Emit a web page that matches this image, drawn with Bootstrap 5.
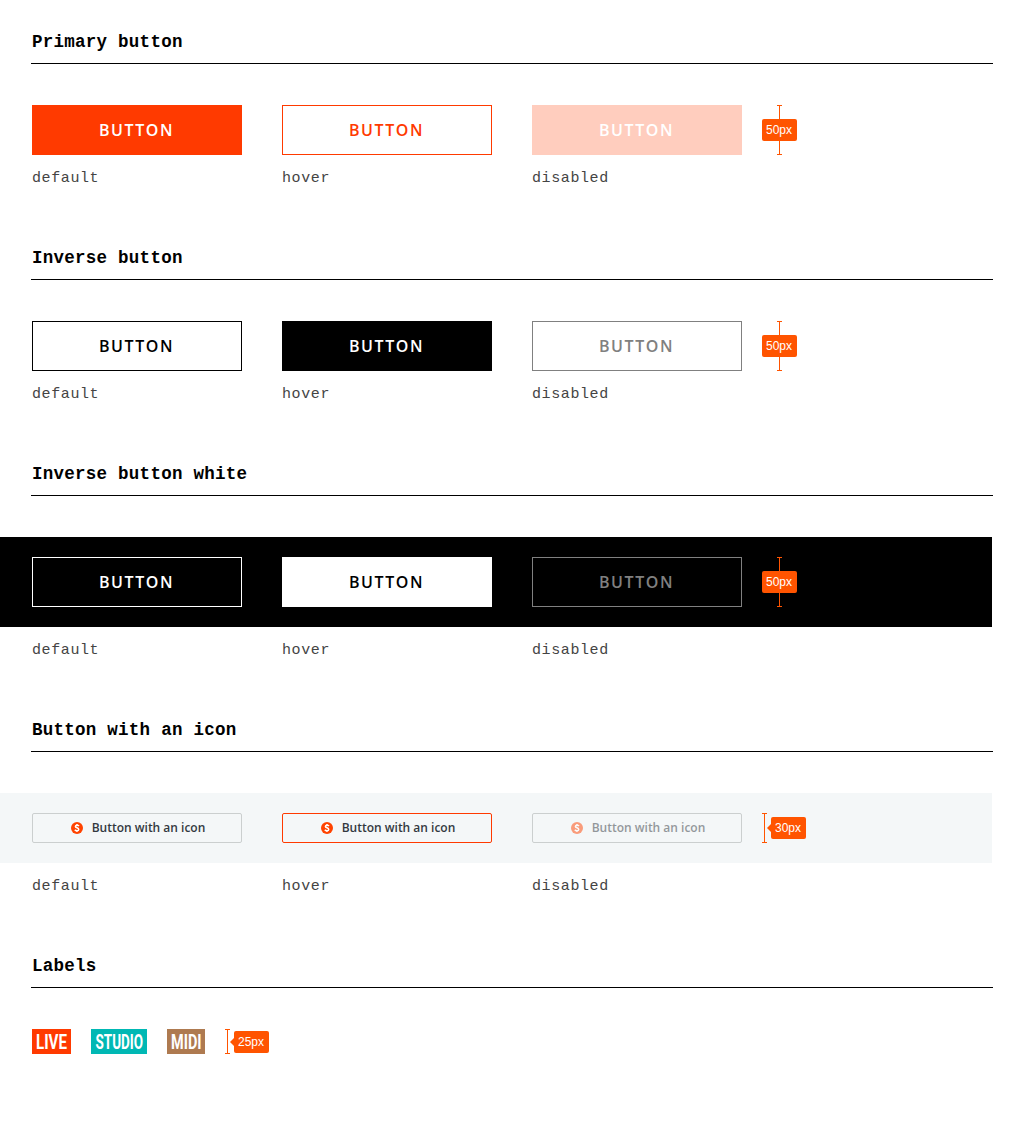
<!DOCTYPE html>
<html lang="en">
<head>
<meta charset="utf-8">
<meta name="viewport" content="width=device-width, initial-scale=1">
<title>Buttons and labels</title>
<link href="https://cdn.jsdelivr.net/npm/bootstrap@5.3.0/dist/css/bootstrap.min.css" rel="stylesheet">
<style>
body{background:#fff;color:#000;min-height:1124px;overflow-x:hidden}
.guide{width:993px}
.guide-title{font:700 17.5px/24px "Liberation Mono",monospace;letter-spacing:.26px;height:64px;margin:0 0 41px 31px;padding:30px 0 0 1px;border-bottom:1px solid #000;width:962px}
.strip{width:992px;padding-left:32px;column-gap:40px}
.strip-dark,.strip-pale{padding-top:20px;padding-bottom:20px}
.strip-dark{background:#000}
.strip-pale{background:#f4f7f8}
.captions{height:61px;padding:12px 0 0 32px;column-gap:40px;font:15px/24px "Liberation Mono",monospace;letter-spacing:.6px;color:#444}
.captions span{width:210px}
.btn.demo{width:210px;height:50px;border-radius:0;padding:0 1px 0 0;font:600 16px/48px "Open Sans",sans-serif;letter-spacing:1.6px;--bs-btn-disabled-opacity:1;opacity:1}
.demo-red{background:#ff3a00!important;border-color:#ff3a00!important;color:#fff!important}
.demo-red-line{background:#fff!important;border-color:#ff3a00!important;color:#ff3a00!important}
.demo-red-off{background:#ffcdbe!important;border-color:#ffcdbe!important;color:#fff!important}
.demo-line{border-color:#000;color:#000}
.demo-black{background:#000;border-color:#000;color:#fff}
.demo-line-off{border-color:#808080!important;color:#808080!important}
.demo-wline{border-color:#fff;color:#fff}
.demo-white{background:#fff;border-color:#fff;color:#000}
.btn.mini{width:210px;height:30px;border-radius:2px;padding:0 0 0 2px;border-color:#cbcfcf;color:#33393f;font:600 12px/28px "Open Sans",sans-serif;gap:9px;opacity:1}
.btn.mini svg{width:12px;height:12px}
.btn.mini.mini-hover{border-color:#ff3a00}
.mini:disabled span,.mini:disabled svg{opacity:.5}
.ruler{width:35px;height:50px;margin-left:-20px;position:relative}
.ruler svg{display:block}
.tag{background:#ff5400;color:#fff;border-radius:2px;width:35px;height:22px;padding-right:1px;font:12px/22px "Liberation Sans",sans-serif;text-align:center}
.ruler .tag{position:absolute;left:0;top:14px}
.side-ruler{margin-left:-20px}
.kinds{padding-left:32px;gap:20px}
.kinds svg{display:block;overflow:visible}
.kinds text{font-family:Roboto,sans-serif;font-weight:700;font-size:20px;fill:#fff}
.kinds .side-ruler{margin-left:0}
</style>
</head>
<body>
<svg class="d-none">
 <symbol id="dollar" viewBox="0 0 12 12"><circle cx="6" cy="6" r="6" fill="#ff4300"/><path d="M8 4.1C7.5 3.5 6.9 3.2 6.1 3.2c-1 0-1.7.4-1.7 1.2 0 1.8 3.3 1.1 3.3 3 0 .8-.7 1.3-1.8 1.3-.8 0-1.6-.3-2.1-.9M6 1.9v1.3M6 8.7v1.4" fill="none" stroke="#fff" stroke-width="1.55"/></symbol>
 <symbol id="span50" viewBox="0 0 35 50"><path d="M15 .5h5M15 49.5h5M17.5 0v50" stroke="#ff5400" fill="none"/></symbol>
</svg>
<main class="guide">
 <section>
  <h2 class="guide-title">Primary button</h2>
  <div class="strip d-flex">
   <button class="btn demo demo-red">BUTTON</button><button class="btn demo demo-red-line">BUTTON</button><button class="btn demo demo-red-off" disabled>BUTTON</button>
   <div class="ruler"><svg width="35" height="50"><use href="#span50"/></svg><div class="tag">50px</div></div>
  </div>
  <div class="captions d-flex"><span>default</span><span>hover</span><span>disabled</span></div>
 </section>
 <section>
  <h2 class="guide-title">Inverse button</h2>
  <div class="strip d-flex">
   <button class="btn demo demo-line">BUTTON</button><button class="btn demo demo-black">BUTTON</button><button class="btn demo demo-line-off" disabled>BUTTON</button>
   <div class="ruler"><svg width="35" height="50"><use href="#span50"/></svg><div class="tag">50px</div></div>
  </div>
  <div class="captions d-flex"><span>default</span><span>hover</span><span>disabled</span></div>
 </section>
 <section>
  <h2 class="guide-title">Inverse button white</h2>
  <div class="strip strip-dark d-flex">
   <button class="btn demo demo-wline">BUTTON</button><button class="btn demo demo-white">BUTTON</button><button class="btn demo demo-line-off" disabled>BUTTON</button>
   <div class="ruler"><svg width="35" height="50"><use href="#span50"/></svg><div class="tag">50px</div></div>
  </div>
  <div class="captions d-flex"><span>default</span><span>hover</span><span>disabled</span></div>
 </section>
 <section>
  <h2 class="guide-title">Button with an icon</h2>
  <div class="strip strip-pale d-flex">
   <button class="btn mini d-flex align-items-center justify-content-center"><svg><use href="#dollar"/></svg><span>Button with an icon</span></button>
   <button class="btn mini mini-hover d-flex align-items-center justify-content-center"><svg><use href="#dollar"/></svg><span>Button with an icon</span></button>
   <button class="btn mini d-flex align-items-center justify-content-center" disabled><svg><use href="#dollar"/></svg><span>Button with an icon</span></button>
   <div class="side-ruler d-flex align-items-center"><svg width="9" height="30"><path d="M0 .5h5M0 29.5h5M2.5 0v30" stroke="#ff5400" fill="none"/><path d="M5 15l4-4v8z" fill="#ff5400"/></svg><div class="tag">30px</div></div>
  </div>
  <div class="captions d-flex"><span>default</span><span>hover</span><span>disabled</span></div>
 </section>
 <section>
  <h2 class="guide-title">Labels</h2>
  <div class="kinds d-flex">
   <svg width="39" height="25"><rect width="39" height="25" fill="#ff3a00"/><text x="4" y="20" textLength="31" lengthAdjust="spacingAndGlyphs">LIVE</text></svg>
   <svg width="56" height="25"><rect width="56" height="25" fill="#00b8b4"/><text x="4.5" y="20" textLength="47.5" lengthAdjust="spacingAndGlyphs">STUDIO</text></svg>
   <svg width="38" height="25"><rect width="38" height="25" fill="#ae7a50"/><text x="4" y="20" textLength="30.5" lengthAdjust="spacingAndGlyphs">MIDI</text></svg>
   <div class="side-ruler d-flex align-items-center"><svg width="9" height="25"><path d="M0 .5h5M0 24.5h5M2.5 0v25" stroke="#ff5400" fill="none"/><path d="M5 13l4-4v8z" fill="#ff5400"/></svg><div class="tag">25px</div></div>
  </div>
 </section>
</main>
<script src="https://cdn.jsdelivr.net/npm/bootstrap@5.3.0/dist/js/bootstrap.bundle.min.js"></script>
</body>
</html>
